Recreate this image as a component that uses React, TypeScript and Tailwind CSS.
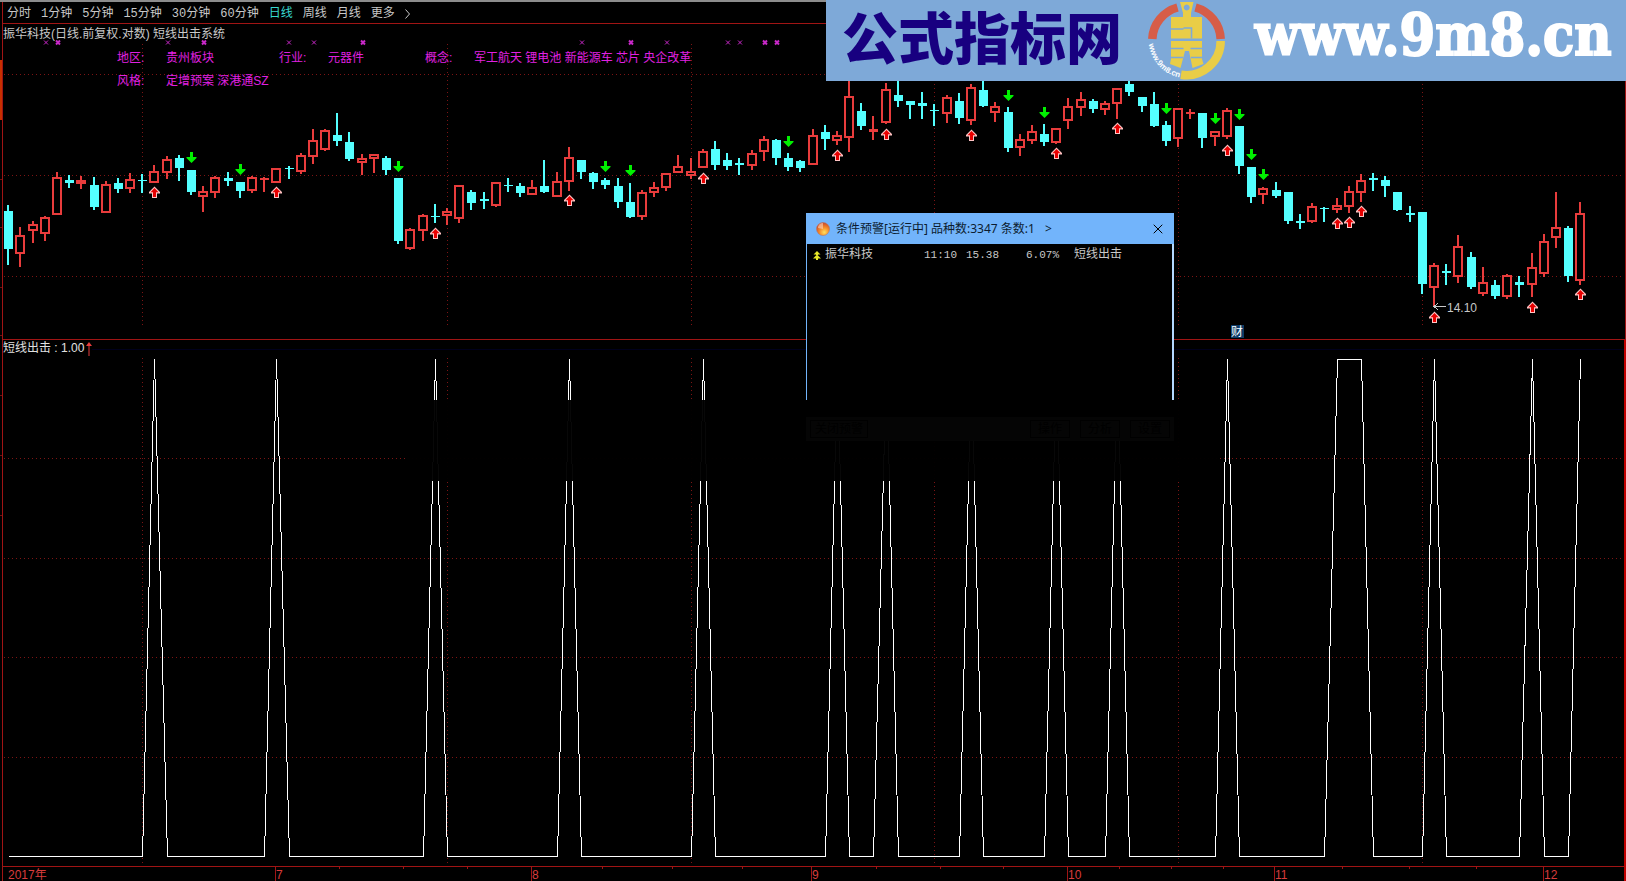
import { X } from "lucide-react";

type Candle = [kind: "u" | "d", high: number, top: number, bottom: number, low: number];

const STEP = 12.186;
const barX = (i: number) => Math.round(8.25 + i * STEP);

// high, body top, body bottom, low
const candles: Candle[] = [
  ["d", 205, 211, 249, 265], ["u", 227, 235, 254, 267], ["u", 221, 224, 231, 243], ["u", 216, 217, 234, 241],
  ["u", 172, 177, 215, 215], ["d", 175, 180, 183, 188], ["u", 176, 180, 184, 189], ["d", 177, 185, 207, 210],
  ["u", 181, 184, 213, 213], ["d", 178, 183, 189, 193], ["u", 173, 179, 189, 193], ["d", 174, 180, 181, 193],
  ["u", 165, 171, 183, 183], ["u", 156, 159, 173, 179], ["d", 155, 158, 168, 181], ["d", 170, 170, 192, 195],
  ["u", 186, 191, 197, 212], ["u", 176, 177, 193, 198], ["d", 172, 178, 181, 186], ["d", 182, 182, 191, 198],
  ["u", 176, 177, 191, 193], ["u", 177, 178, 180, 192], ["u", 168, 168, 183, 183], ["d", 166, 168, 169, 179],
  ["u", 153, 155, 172, 174], ["u", 129, 140, 157, 164], ["u", 129, 130, 150, 151], ["d", 113, 135, 141, 146],
  ["d", 132, 142, 159, 161], ["u", 154, 158, 163, 175], ["u", 154, 154, 159, 173], ["d", 156, 158, 170, 175],
  ["d", 178, 178, 241, 244], ["u", 228, 229, 249, 250], ["u", 214, 215, 231, 241], ["d", 204, 216, 217, 223],
  ["u", 208, 211, 216, 225], ["u", 185, 185, 219, 223], ["d", 190, 192, 203, 210], ["d", 192, 199, 201, 209],
  ["u", 182, 182, 206, 207], ["d", 178, 185, 186, 192], ["d", 183, 186, 193, 197], ["u", 180, 187, 195, 195],
  ["d", 160, 186, 192, 193], ["u", 172, 181, 197, 197], ["u", 147, 157, 182, 191], ["d", 160, 160, 172, 179],
  ["d", 172, 173, 182, 189], ["d", 178, 180, 185, 189], ["d", 178, 186, 202, 208], ["d", 183, 202, 217, 218],
  ["u", 190, 192, 217, 220], ["u", 182, 187, 193, 197], ["u", 173, 173, 188, 191], ["u", 155, 166, 173, 173],
  ["u", 158, 171, 176, 179], ["u", 149, 151, 168, 168], ["d", 141, 149, 165, 170], ["d", 153, 160, 166, 170],
  ["d", 158, 163, 165, 175], ["u", 150, 153, 166, 170], ["u", 136, 139, 152, 161], ["d", 139, 140, 158, 165],
  ["d", 153, 158, 167, 171], ["d", 160, 161, 168, 172], ["u", 129, 135, 165, 165], ["d", 125, 132, 139, 150],
  ["u", 131, 135, 141, 145], ["u", 70, 96, 138, 152], ["d", 103, 111, 126, 130], ["u", 116, 129, 132, 140],
  ["u", 83, 89, 123, 124], ["d", 75, 95, 101, 107], ["d", 101, 101, 105, 119], ["d", 92, 103, 106, 119],
  ["d", 104, 110, 111, 126], ["u", 95, 97, 114, 123], ["d", 93, 101, 118, 124], ["u", 84, 87, 121, 125],
  ["d", 70, 90, 106, 107], ["u", 102, 106, 113, 122], ["d", 107, 112, 148, 152], ["u", 134, 139, 148, 156],
  ["u", 125, 131, 141, 144], ["d", 124, 134, 142, 146], ["u", 128, 128, 143, 144], ["u", 98, 106, 121, 129],
  ["u", 92, 99, 108, 116], ["d", 99, 101, 109, 113], ["u", 101, 103, 110, 115], ["u", 88, 88, 104, 119],
  ["d", 64, 84, 92, 96], ["d", 97, 97, 106, 112], ["d", 92, 104, 126, 127], ["d", 121, 125, 141, 146],
  ["u", 108, 108, 139, 147], ["u", 109, 112, 114, 119], ["d", 113, 113, 138, 148], ["u", 131, 131, 137, 146],
  ["u", 108, 110, 137, 139], ["d", 126, 126, 166, 174], ["d", 167, 167, 197, 203], ["u", 187, 188, 195, 204],
  ["d", 182, 190, 196, 198], ["d", 192, 192, 221, 224], ["d", 214, 221, 223, 229], ["u", 203, 206, 222, 223],
  ["d", 207, 208, 209, 222], ["u", 198, 205, 210, 213], ["u", 186, 191, 207, 213], ["u", 174, 180, 193, 202],
  ["d", 173, 178, 180, 191], ["d", 176, 180, 186, 197], ["d", 192, 192, 210, 211], ["d", 206, 213, 215, 222],
  ["d", 212, 212, 284, 294], ["u", 263, 265, 288, 307], ["d", 264, 271, 273, 285], ["u", 235, 246, 277, 283],
  ["d", 252, 257, 287, 289], ["u", 267, 282, 294, 296], ["d", 280, 285, 296, 299], ["u", 274, 275, 297, 299],
  ["d", 276, 282, 285, 297], ["u", 253, 267, 285, 297], ["u", 234, 241, 274, 277], ["u", 192, 227, 238, 248],
  ["d", 226, 228, 276, 282], ["u", 202, 213, 281, 285],
];

// bar index -> top of the arrow
const buys: [number, number][] = [
  [12, 187], [22, 187], [35, 228], [46, 195], [57, 173], [68, 150], [72, 129], [79, 130], [86, 148],
  [91, 123], [100, 145], [109, 218], [110, 217], [111, 206], [117, 312], [125, 302], [129, 289],
];
const sells: [number, number][] = [
  [15, 152], [19, 164], [32, 161], [49, 161], [51, 165], [64, 136], [82, 90], [85, 107], [95, 103],
  [99, 113], [101, 109], [102, 149], [103, 169],
];

const marks: [x: number, bold: boolean][] = [
  [46, false], [58, true], [168, false], [204, true], [289, false], [314, false], [363, true], [582, false],
  [631, true], [667, false], [728, false], [740, false], [765, true], [777, true],
];

const gridX = [142.5, 447.5, 691.5, 934.5, 1178.5, 1422.5];
const periods = ["分时", "1分钟", "5分钟", "15分钟", "30分钟", "60分钟", "日线", "周线", "月线", "更多"];
const gutter = ["h-15", "h-12", "h-15", "h-12", "h-15", "h-15", "h-15"];

const signal = candles
  .map((_, i) => `${barX(i) + 0.5},${buys.some(([b]) => b === i) ? 359.5 : 856.5}`)
  .join(" ");

function Bar({ i, candle }: { i: number; candle: Candle }) {
  const [kind, high, top, bottom, low] = candle;
  const x = barX(i);
  const thin = bottom - top < 2;
  const color = kind === "u" ? "#e83c3c" : "#54ffff";
  return (
    <g fill={color}>
      {high < top && <rect x={x - 1} y={high} width="2" height={top - high} />}
      {low > bottom && <rect x={x - 1} y={bottom} width="2" height={low - bottom} />}
      {kind === "u" && bottom - top > 3 ? (
        <rect x={x - 4} y={top + 1} width="8" height={bottom - top - 2} fill="#000" stroke={color} strokeWidth="2" />
      ) : (
        <rect x={x - 4} y={top} width="9" height={thin ? 1 : bottom - top} />
      )}
    </g>
  );
}

function PriceChart() {
  return (
    <svg viewBox="3 24 1621 315" className="block h-auto w-full" shapeRendering="crispEdges">
      <g stroke="#7c1414" strokeDasharray="1 3">
        {[74.5, 175.5, 276.5].map((y) => (
          <line key={y} x1="4" x2="1624" y1={y} y2={y} />
        ))}
        {gridX.map((x) => (
          <line key={x} x1={x} x2={x} y1="44" y2="327" />
        ))}
      </g>
      {marks.map(([x, bold]) => (
        <path
          key={x}
          d={`M${x - 2} 40.5l4 4m0 -4l-4 4`}
          stroke="#c828c8"
          strokeWidth={bold ? 2 : 1}
          shapeRendering="auto"
        />
      ))}
      {candles.map((c, i) => (
        <Bar key={i} i={i} candle={c} />
      ))}
      {buys.map(([i, y]) => (
        <g key={i} transform={`translate(${barX(i) + 0.5} ${y})`} shapeRendering="auto">
          <path d="M0 -.5L5.500 5V6.500H2.500V11H-2.500V6.500H-5.500V5Z" fill="#ffc4c4" />
          <path d="M0 1L4 5.200H1.500V10H-1.500V5.200H-4Z" fill="#e80000" />
        </g>
      ))}
      {sells.map(([i, y]) => (
        <path
          key={i}
          transform={`translate(${barX(i) + 0.5} ${y})`}
          d="M-1.500 0h3v5H5v1L0 11L-5 6V5h3.500Z"
          fill="#00f000"
          shapeRendering="auto"
        />
      ))}
      <path d="M1434 306.500h12M1438 303l-4 3.500l4 3.500" fill="none" stroke="#c8c8c8" />
      <text x="1447" y="312" fontSize="12" fill="#c8c8c8" fontFamily="Liberation Sans, sans-serif">
        14.10
      </text>
      <rect x="1231" y="325" width="13" height="13" fill="#0d3a66" />
      <text x="1231" y="336" fontSize="12" fill="#fff" fontFamily="Noto Sans CJK SC, sans-serif">
        财
      </text>
    </svg>
  );
}

function SignalChart() {
  return (
    <svg viewBox="3 340 1621 526" className="block h-auto w-full" shapeRendering="crispEdges">
      <line x1="92" x2="1624" y1="349.500" y2="349.500" stroke="#00001c" />
      <g stroke="#7c1414" strokeDasharray="1 3">
        {[458.5, 558.5, 657.5, 757.5].map((y) => (
          <line key={y} x1="4" x2="1624" y1={y} y2={y} />
        ))}
        {gridX.map((x) => (
          <line key={x} x1={x} x2={x} y1="358" y2="864" />
        ))}
      </g>
      <polyline points={signal} fill="none" stroke="#fff" />
      <rect x="407" y="400" width="813" height="81" fill="#000" fillOpacity="0.97" />
    </svg>
  );
}

function TimeAxis() {
  const months: [number, string][] = [[276, "7"], [532, "8"], [812, "9"], [1068, "10"], [1275, "11"], [1544, "12"]];
  const ticks = [339, 403, 467, 602, 672, 742, 876, 940, 1003, 1119, 1171, 1223, 1342, 1409, 1476];
  return (
    <svg viewBox="3 867 1621 14" className="block h-auto w-full">
      {ticks.map((x) => (
        <rect key={x} x={x} y="867" width="1" height="2" fill="#a01414" />
      ))}
      <g fill="#d83c3c" fontSize="12" fontFamily="Liberation Sans, Noto Sans CJK SC, sans-serif">
        <text x="8" y="879">
          2017年
        </text>
        {months.map(([x, label]) => (
          <g key={label}>
            <rect x={x - 1} y="867" width="1" height="14" fill="#a01414" />
            <text x={x} y="879">
              {label}
            </text>
          </g>
        ))}
      </g>
    </svg>
  );
}

function Tags() {
  return (
    <dl className="grid grid-cols-[49px_113px_49px_97px_49px_auto] justify-start gap-y-[5px] pl-[114px] text-xs leading-[18px] text-[#e020e0]">
      <dt>地区:</dt>
      <dd>贵州板块</dd>
      <dt>行业:</dt>
      <dd>元器件</dd>
      <dt>概念:</dt>
      <dd>军工航天 锂电池 新能源车 芯片 央企改革</dd>
      <dt>风格:</dt>
      <dd className="whitespace-nowrap">定增预案 深港通SZ</dd>
    </dl>
  );
}

function Coin() {
  return (
    <svg viewBox="6 0 81 81" className="size-[81px] shrink-0">
      <g fill="none" strokeWidth="8.500">
        <path d="M12.300 39A34.300 34.300 0 0 1 37.500 7.500" stroke="#d65d48" />
        <path d="M55.500 7.500A34.300 34.300 0 0 1 80.700 39" stroke="#d65d48" />
        <path d="M80.700 41A34.300 34.300 0 0 1 41 74.700" stroke="#e9cd47" />
      </g>
      <path
        fill="#e9cd47"
        fillRule="evenodd"
        d="M40 2H53.500L51 13V17H62V38.500H31V17H43V13ZM46.700 4.500a3 3 0 1 0 .01 0Z"
      />
      <path fill="#e9cd47" d="M31 41H62V59L63.500 64L52.500 68L49 51H45L40.500 68L30 64L31 59Z" />
      <path
        d="M31 29H43.500M43.500 28H51.500V38.500M31 48.500H43.500M50.500 48.500H62M31 57.500H43M51 57.500H62"
        fill="none"
        stroke="#7ea9d8"
        strokeWidth="1.600"
      />
      <path id="rim" d="M9 44A38 38 0 0 0 40 77.500" fill="none" />
      <text fontSize="8" fontWeight="bold" fill="#fff" fontFamily="Liberation Sans, sans-serif">
        <textPath href="#rim">www.9m8.cn</textPath>
      </text>
    </svg>
  );
}

function Banner() {
  return (
    <a
      href="#"
      className="absolute right-0 top-0 z-10 flex h-[81px] w-[800px] items-center bg-[#7ea9d8] pl-4 whitespace-nowrap"
    >
      <span className="w-[304px] pb-0.5 font-['Liberation_Sans','Noto_Sans_CJK_SC',sans-serif] text-[56px] leading-none font-black text-[#180080]">
        公式指标网
      </span>
      <Coin />
      <span className="pb-3 pl-7 font-['DejaVu_Serif_Condensed','DejaVu_Serif',serif] text-[57px] leading-none font-bold text-white [-webkit-text-stroke:2px_white]">
        www.9m8.cn
      </span>
    </a>
  );
}

function AlertWindow() {
  return (
    <section className="absolute top-[213px] left-[806px] z-10 w-[368px]">
      <header className="flex h-[31px] items-center bg-[#72b4fb] pr-2 pl-[10px] font-['Noto_Sans','Noto_Sans_CJK_SC',sans-serif] text-xs text-[#0c1c30]">
        <svg viewBox="0 0 14 14" className="mr-1.5 size-3.5">
          <defs>
            <radialGradient id="ball" cx="0.6" cy="0.75" r="0.75">
              <stop offset="0" stopColor="#ffe060" />
              <stop offset="0.5" stopColor="#f58a28" />
              <stop offset="1" stopColor="#c8442a" />
            </radialGradient>
          </defs>
          <circle cx="7" cy="7" r="6.500" fill="url(#ball)" stroke="#b8705a" strokeWidth="0.500" />
          <path d="M2 6A5 4.500 0 0 1 7 1v6Z" fill="#ffd8c0" fillOpacity="0.600" />
        </svg>
        <h2 className="whitespace-nowrap">条件预警[运行中] 品种数:3347 条数:1</h2>
        <span className="grow pl-2.5">&gt;</span>
        <button aria-label="关闭" className="text-black">
          <X className="size-4" strokeWidth={1.5} />
        </button>
      </header>
      <div className="h-[156px] border-r-2 border-l border-r-[#b4d8ff] border-l-[#72b4fb] bg-black">
        <table className="w-full table-fixed text-left text-xs text-[#c8c8c8]">
          <tbody className="font-['Liberation_Mono','Noto_Sans_CJK_SC',monospace]">
            <tr className="h-[22px]">
              <td className="w-[117px]">
                <span className="flex items-center gap-1 pl-1.5">
                  <svg viewBox="0 0 8 9" className="h-[9px] w-2">
                    <path d="M4 0l3.500 3.500H.5ZM3 3h2v1H3ZM4 3.500L8 7.500H0ZM3 7h2v2H3Z" fill="#e8e828" />
                  </svg>
                  振华科技
                </span>
              </td>
              <td className="w-[42px] text-[11px]">11:10</td>
              <td className="w-[60px] text-[11px]">15.38</td>
              <td className="w-12 text-[11px]">6.07%</td>
              <td>短线出击</td>
            </tr>
          </tbody>
        </table>
      </div>
      <div className="h-[17px] bg-black" />
      <footer className="flex h-6 items-center justify-end gap-2.5 bg-[#050505] px-1 text-xs text-black">
        <button className="mr-auto border border-black px-1">关闭预警</button>
        <button className="w-10 border border-black">操作</button>
        <button className="w-10 border border-black">分析</button>
        <button className="w-10 border border-black">设置</button>
      </footer>
    </section>
  );
}

export default function App() {
  return (
    <div className="relative min-h-screen overflow-hidden bg-black font-['Liberation_Sans','Noto_Sans_CJK_SC',sans-serif]">
      <div className="h-0.5 bg-[#8c8c8c]" />
      <div className="flex">
        <div className="w-0.5 shrink-0 pt-[58px]">
          <div className="h-15 bg-[#c83000]" />
          {gutter.map((h, i) => (
            <div key={i} className={`border-b border-[#701010] ${h}`} />
          ))}
        </div>
        <main className="min-w-0 grow border-l border-[#a01414]">
          <nav className="flex h-[22px] items-center gap-[10px] border-b border-[#a01414] pt-0.5 pl-1 font-['Liberation_Mono','Noto_Sans_CJK_SC',monospace] text-xs leading-none text-[#c8c8c8]">
            {periods.map((p) => (
              <a key={p} href="#" className={p === "日线" ? "text-[#38d8d0]" : ""}>
                {p}
              </a>
            ))}
            <svg viewBox="0 0 5 10" className="h-2.5 w-[5px]">
              <path d="M.5.5L4.500 5L.5 9.500" fill="none" stroke="#c8c8c8" />
            </svg>
          </nav>
          <div className="relative border-r border-b border-[#a01414] pr-px">
            <PriceChart />
            <div className="absolute inset-x-0 top-0">
              <h1 className="text-xs leading-5 text-[#c8c8c8]">振华科技(日线.前复权.对数) 短线出击系统</h1>
              <div className="pt-[5px]">
                <Tags />
              </div>
            </div>
          </div>
          <div className="relative border-r-2 border-b border-r-[#c00000] border-b-[#a01414]">
            <SignalChart />
            <p className="absolute top-0 left-0 flex items-center text-xs leading-[17px] whitespace-pre text-[#e0e0e0]">
              短线出击 : 1.00
              <svg viewBox="0 0 6 14" className="ml-0.5 h-3.5 w-1.5">
                <path d="M3 0L6 4H3.500v10h-1V4H0Z" fill="#e83c3c" />
              </svg>
            </p>
          </div>
          <div className="border-r-2 border-[#c00000]">
            <TimeAxis />
          </div>
        </main>
      </div>
      <Banner />
      <AlertWindow />
    </div>
  );
}
